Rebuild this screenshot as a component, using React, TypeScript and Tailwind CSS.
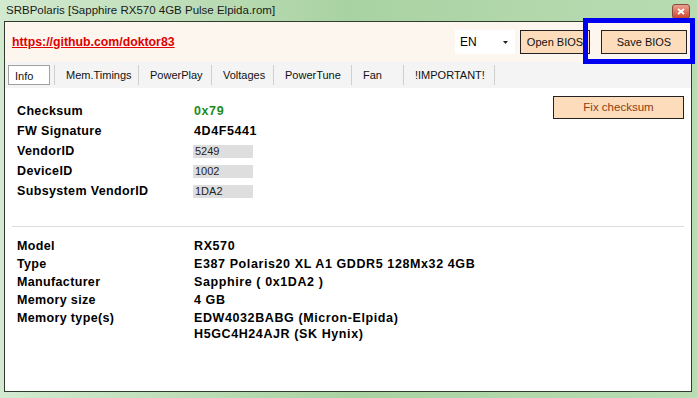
import React from 'react'

const tabs = ['Mem.Timings', 'PowerPlay', 'Voltages', 'PowerTune', 'Fan', '!IMPORTANT!']
const tabWidths = [84, 73, 62, 78, 52, 91]

function Label({ children }: { children: React.ReactNode }) {
  return <div className="text-[12.5px] font-bold tracking-[0.35px] text-black">{children}</div>
}

function Boxed({ value }: { value: string }) {
  return (
    <div className="ml-[-1px] flex h-[13px] w-[60px] items-center bg-[#dedede] pl-[2px] text-[11px] leading-none text-[#222]">
      {value}
    </div>
  )
}

export default function App() {
  const top = [
    { k: 'Checksum', v: <span className="font-bold tracking-[0.6px] text-[#1c8c1c]">0x79</span> },
    { k: 'FW Signature', v: <span className="font-bold tracking-[0.6px]">4D4F5441</span> },
    { k: 'VendorID', v: <Boxed value="5249" /> },
    { k: 'DeviceID', v: <Boxed value="1002" /> },
    { k: 'Subsystem VendorID', v: <Boxed value="1DA2" /> },
  ]
  const bottom = [
    ['Model', 'RX570'],
    ['Type', 'E387 Polaris20 XL A1 GDDR5 128Mx32 4GB'],
    ['Manufacturer', 'Sapphire ( 0x1DA2 )'],
    ['Memory size', '4 GB'],
    ['Memory type(s)', 'EDW4032BABG (Micron-Elpida)'],
  ]

  return (
    <div
      className="relative flex h-[398px] w-[697px] flex-col overflow-hidden bg-gradient-to-r from-[#d3ead0] via-[#a9d2a2] to-[#b9dcb3] text-black"
      style={{ fontFamily: '"Liberation Sans", Arial, sans-serif' }}
    >
      {/* title bar */}
      <div className="flex h-[21px] shrink-0 items-center justify-between pl-[6px] pr-[7px]">
        <span className="text-[11.5px] leading-none text-[#1a1a1a]">SRBPolaris [Sapphire RX570 4GB Pulse Elpida.rom]</span>
        <div className="mt-[1px] flex h-[15px] w-[18px] items-center justify-center rounded-[3px] border border-[#8a4a40] bg-gradient-to-b from-[#e9a08f] to-[#c8472f]">
          <svg width="8" height="7" viewBox="0 0 8 7">
            <path d="M1 1 L7 6 M7 1 L1 6" stroke="white" strokeWidth="1.8" />
          </svg>
        </div>
      </div>

      {/* client */}
      <div className="mb-[6px] ml-[4px] mr-[5px] flex flex-1 flex-col border border-[#2e3b2d] bg-white">
        {/* header */}
        <div className="flex h-[40px] shrink-0 items-center justify-between bg-[#fdf6ee] pl-[7px] pr-[4px]">
          <a href="#" className="text-[12.3px] font-bold text-[#e00000] underline">https://github.com/doktor83</a>
          <div className="flex items-center">
            <div className="flex h-[24px] w-[60px] items-center justify-between bg-white pl-[5px] pr-[7px] text-[12px]">
              <span>EN</span>
              <svg width="5" height="3" viewBox="0 0 5 3"><path d="M0 0 H5 L2.5 3 Z" fill="#222" /></svg>
            </div>
            <button className="ml-[5px] h-[24px] w-[70px] border border-[#222] bg-[#fddcbb] text-[11px] text-[#111]">Open BIOS</button>
            <button className="ml-[11px] h-[24px] w-[86px] border border-[#222] bg-[#fddcbb] text-[11px] text-[#111]">Save BIOS</button>
          </div>
        </div>

        {/* tabs */}
        <div className="flex h-[26px] shrink-0 items-center bg-[#f4f4f4] pl-[3px] text-[11px] text-[#111]">
          <div className="flex h-[20px] w-[42px] items-center border border-[#a0a0a0] bg-white pl-[6px] pt-[2px]">Info</div>
          <div className="ml-[4px] h-[20px] w-px bg-[#cfcfcf]" />
          {tabs.map((t, i) => (
            <div key={t} className="flex h-[20px] items-center" style={{ width: tabWidths[i] }}>
              <span className="flex-1 pl-[11px]">{t}</span>
              <div className="h-[20px] w-px bg-[#cfcfcf]" />
            </div>
          ))}
        </div>

        {/* content */}
        <div className="flex flex-1 flex-col px-[7px] pt-[8px]">
          <div className="flex items-start justify-between">
            <div className="mt-[5px] grid grid-cols-[177px_1fr] pl-[5px]">
              {top.map(r => (
                <React.Fragment key={r.k}>
                  <div className="flex h-[20px] items-center"><Label>{r.k}</Label></div>
                  <div className="flex h-[20px] items-center text-[12.5px]">{r.v}</div>
                </React.Fragment>
              ))}
            </div>
            <button className="h-[23px] w-[131px] border border-[#222] bg-[#fddcbb] text-[11.5px] text-[#8a3f14]">Fix checksum</button>
          </div>

          <div className="mt-[25px] h-px bg-[#dcdcdc]" />

          <div className="mt-[10px] grid grid-cols-[177px_1fr] pl-[5px]">
            {bottom.map(([k, v]) => (
              <React.Fragment key={k}>
                <div className="flex h-[18px] items-center"><Label>{k}</Label></div>
                <div className="flex h-[18px] items-center text-[12.5px] font-bold tracking-[0.6px]">{v}</div>
              </React.Fragment>
            ))}
            <div />
            <div className="flex h-[15px] items-center text-[12.5px] font-bold tracking-[0.6px]">H5GC4H24AJR (SK Hynix)</div>
          </div>
        </div>
      </div>

      {/* highlight annotation */}
      <div className="pointer-events-none absolute left-[583px] top-[18px] h-[46px] w-[112px] border-[5px] border-[#0000f0]" />
    </div>
  )
}
